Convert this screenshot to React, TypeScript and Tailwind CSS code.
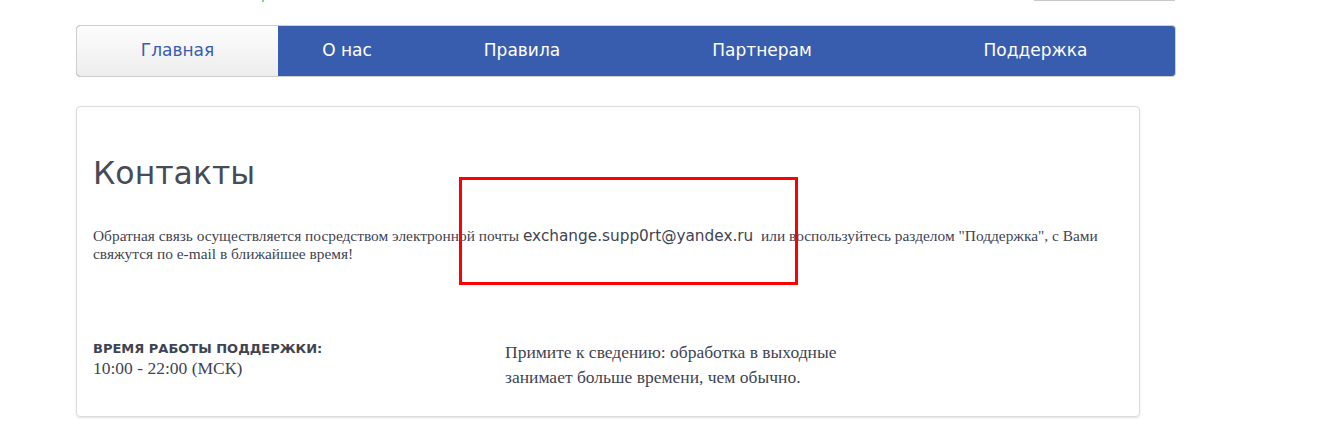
import React from "react";

const NAV = [
  { label: "О нас", w: "w-[138px]" },
  { label: "Правила", w: "w-[212px]" },
  { label: "Партнерам", w: "w-[268px]" },
  { label: "Поддержка", w: "flex-1" },
];

export default function App() {
  return (
    <div className="relative min-h-[445px] w-[1329px] bg-white">
      {/* bits of the header cut off at the top */}
      <div className="absolute left-[262px] top-0 h-[2px] w-[2px] bg-[#8fd18f]" />
      <div className="absolute left-[1034px] top-0 h-[1px] w-[141px] bg-[#c8c8c8]" />

      <div className="pl-[76px] pt-[25px]">
        <nav className="flex h-[52px] w-[1100px] overflow-hidden rounded-[4px] border border-[#cfcfcf] bg-[#395dae] font-['DejaVu_Sans',sans-serif] text-[17px]">
          <a className="flex w-[201px] items-center justify-center bg-gradient-to-b from-[#fdfdfd] to-[#ededed] text-[#3a5dae]">
            Главная
          </a>
          {NAV.map((item) => (
            <a
              key={item.label}
              className={`flex ${item.w} items-center justify-center text-white`}
            >
              {item.label}
            </a>
          ))}
        </nav>

        <div className="mt-[29px] h-[311px] w-[1064px] rounded-[4px] border border-[#dcdcdc] px-[16px] shadow-[0_1px_2px_rgba(0,0,0,0.12)]">
          <h1 className="pt-[44px] font-['DejaVu_Sans',sans-serif] text-[31.5px] leading-[44px] text-[#474b57]">
            Контакты
          </h1>

          <p className="mt-[32px] font-['Liberation_Serif',serif] text-[15.4px] leading-[17px] text-[#3f4452]">
            Обратная связь осуществляется посредством электронной почты{" "}
            <span className="font-['DejaVu_Sans',sans-serif] text-[15.3px] leading-[17px]">
              exchange.supp0rt@yandex.ru
            </span>{" "}
            &nbsp;или воспользуйтесь разделом "Поддержка", с Вами свяжутся по
            e-mail в ближайшее время!
          </p>

          <div className="mt-[78px] flex">
            <div className="w-[412px]">
              <div className="font-['DejaVu_Sans',sans-serif] text-[13px] font-bold leading-[17px] text-[#3f4452]">
                ВРЕМЯ РАБОТЫ ПОДДЕРЖКИ:
              </div>
              <div className="font-['Liberation_Serif',serif] text-[17.5px] leading-[22px] text-[#3f4452]">
                10:00 - 22:00 (МСК)
              </div>
            </div>
            <p className="w-[380px] font-['Liberation_Serif',serif] text-[17.5px] leading-[25px] text-[#3f4452]">
              Примите к сведению: обработка в выходные занимает больше
              времени, чем обычно.
            </p>
          </div>
        </div>
      </div>

      {/* red highlight frame over the e-mail */}
      <div className="absolute left-[459px] top-[177px] h-[108px] w-[339px] border-[3px] border-[#ff0000]" />
    </div>
  );
}
